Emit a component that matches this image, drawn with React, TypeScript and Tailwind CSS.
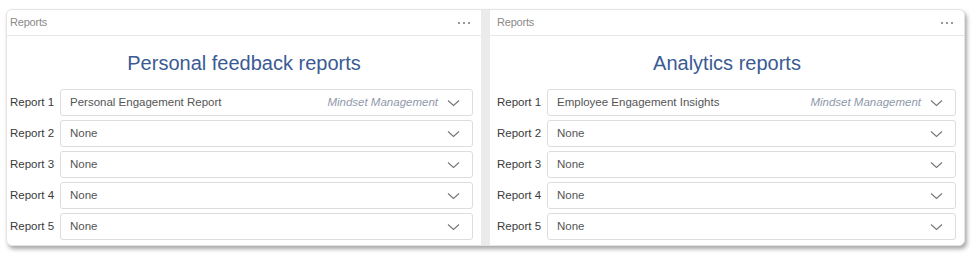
type Row = { label: string; value: string; vendor?: string };

const personal: Row[] = [
  { label: "Report 1", value: "Personal Engagement Report", vendor: "Mindset Management" },
  { label: "Report 2", value: "None" },
  { label: "Report 3", value: "None" },
  { label: "Report 4", value: "None" },
  { label: "Report 5", value: "None" },
];

const analytics: Row[] = [
  { label: "Report 1", value: "Employee Engagement Insights", vendor: "Mindset Management" },
  { label: "Report 2", value: "None" },
  { label: "Report 3", value: "None" },
  { label: "Report 4", value: "None" },
  { label: "Report 5", value: "None" },
];

function Chevron() {
  return (
    <svg width="13" height="8" viewBox="0 0 13 8" className="text-[#777]">
      <polyline points="1,1.5 6.5,6.5 12,1.5" fill="none" stroke="currentColor" strokeWidth="1.1" />
    </svg>
  );
}

function Panel({ title, rows, inset }: { title: string; rows: Row[]; inset: string }) {
  return (
    <section className="flex-1 bg-white flex flex-col">
      <header className={`h-[26px] flex items-center justify-between pr-[11px] border-b border-[#e6e6e6] ${inset}`}>
        <span className="text-[11px] text-[#8a8a8a] tracking-[-0.2px]">Reports</span>
        <span className="flex gap-[3px] items-center">
          <i className="block w-[2px] h-[2px] rounded-full bg-[#777]" />
          <i className="block w-[2px] h-[2px] rounded-full bg-[#777]" />
          <i className="block w-[2px] h-[2px] rounded-full bg-[#777]" />
        </span>
      </header>
      <h2 className="h-[53px] flex items-center justify-center text-[20px] text-[#3a5b93]">
        {title}
      </h2>
      <div className={`flex flex-col gap-[4px] pr-[8px] ${inset}`}>
        {rows.map((r) => (
          <div key={r.label} className="flex items-center h-[27px]">
            <span className="w-[50px] shrink-0 text-[11.5px] text-[#3a3a3a]">{r.label}</span>
            <div className="flex-1 h-full flex items-center border border-[#dddddd] rounded-[3px] pl-[9px] pr-[12px]">
              <span className="text-[11.5px] text-[#555] flex-1">{r.value}</span>
              {r.vendor && (
                <span className="text-[11.5px] italic text-[#8f99ab] mr-[9px]">{r.vendor}</span>
              )}
              <Chevron />
            </div>
          </div>
        ))}
      </div>
    </section>
  );
}

export default function App() {
  return (
    <main className="w-[975px] h-[258px] bg-white pt-[9px] pl-[6px] font-['Liberation_Sans',sans-serif]">
      <div className="w-[959px] h-[237px] flex gap-[9px] bg-[#ebebeb] rounded-[6px] overflow-hidden shadow-[2px_3px_4px_rgba(0,0,0,0.35)] border border-[#e4e4e4]">
        <Panel title="Personal feedback reports" rows={personal} inset="pl-[3px]" />
        <Panel title="Analytics reports" rows={analytics} inset="pl-[7px]" />
      </div>
    </main>
  );
}
